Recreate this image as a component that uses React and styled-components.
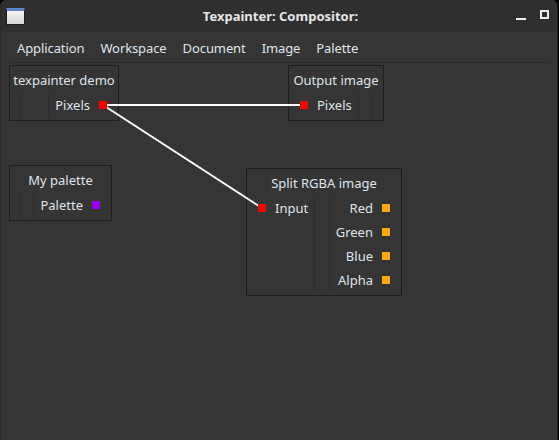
import React from "react";
import styled, { createGlobalStyle } from "styled-components";

const GlobalStyle = createGlobalStyle`
  html, body {
    margin: 0;
    padding: 0;
    background: #000;
    width: 559px;
    height: 440px;
    overflow: hidden;
  }
  * {
    box-sizing: border-box;
  }
`;

const Window = styled.div`
  width: 558px;
  height: 440px;
  display: flex;
  flex-direction: column;
  background: #353535;
  border-left: 1px solid #2a2a2a;
  border-right: 1px solid #222;
  border-radius: 6px 6px 0 0;
  overflow: hidden;
  font-family: "Noto Sans", "Open Sans", sans-serif;
  font-size: 13px;
  color: #dfe4ea;
`;

const TitleBar = styled.div`
  height: 32px;
  flex: none;
  display: flex;
  align-items: center;
  padding: 0 8px 0 5px;
  background: #2f2f2f;
`;

const AppIcon = styled.div`
  width: 19px;
  height: 17px;
  border: 1px solid #1c1c1c;
  border-top: 3px solid #5d85c8;
  background: linear-gradient(#f4f4f4, #d8d8d8);
  border-radius: 1px;
`;

const Title = styled.div`
  flex: 1;
  text-align: center;
  font-weight: bold;
  color: #e6e6e6;
  padding-left: 20px;
`;

const WinButtons = styled.div`
  display: flex;
  align-items: center;
  gap: 14px;
`;

const MinButton = styled.div`
  width: 10px;
  height: 2px;
  margin-top: 6px;
  background: #eee;
`;

const MaxButton = styled.div`
  width: 9px;
  height: 9px;
  margin-top: -4px;
  border: 2px solid #eee;
`;

const MenuBar = styled.div`
  height: 31px;
  flex: none;
  display: flex;
  align-items: center;
  margin: 0 8px;
  padding-top: 1px;
  border-bottom: 1px solid #2b2b2b;
`;

const MenuItem = styled.div`
  padding: 0 8px;
  letter-spacing: -0.1px;
`;

const Canvas = styled.div`
  position: relative;
  flex: 1;
`;

const Wires = styled.svg`
  position: absolute;
  left: 0;
  top: 0;
  width: 100%;
  height: 100%;
  pointer-events: none;
  z-index: 2;
`;

const Node = styled.div`
  position: absolute;
  left: ${(p) => p.$x}px;
  top: ${(p) => p.$y}px;
  width: ${(p) => p.$w}px;
  border: 1px solid #1f1f1f;
  background: #353535;
  padding-bottom: 3px;
  display: flex;
  flex-direction: column;
`;

const NodeTitle = styled.div`
  height: 27px;
  display: flex;
  align-items: center;
  justify-content: center;
  white-space: nowrap;
`;

const NodeBody = styled.div`
  display: flex;
`;

const PortColumn = styled.div`
  display: flex;
  flex-direction: column;
  padding: ${(p) => (p.$side === "in" ? "0 6px 0 11px" : "0 11px 0 6px")};
  &:empty {
    padding: 0;
    width: 10px;
  }
`;

const Spacer = styled.div`
  flex: 1;
  min-width: 12px;
  border-left: 1px solid #2c2c2c;
  border-right: 1px solid #2c2c2c;
`;

const PortRow = styled.div`
  height: 24px;
  display: flex;
  align-items: center;
  justify-content: ${(p) => (p.$side === "in" ? "flex-start" : "flex-end")};
  gap: 9px;
  white-space: nowrap;
`;

const Port = styled.span`
  position: relative;
  z-index: 3;
  width: 8px;
  height: 8px;
  flex: none;
  background: ${(p) => p.$color};
`;

const portColors = {
  image: "#ff0000",
  channel: "#ffaa00",
  palette: "#9900ff",
};

const nodes = [
  {
    title: "texpainter demo",
    x: 8,
    y: 2,
    w: 110,
    inputs: [],
    outputs: [{ name: "Pixels", type: "image" }],
  },
  {
    title: "Output image",
    x: 287,
    y: 2,
    w: 96,
    inputs: [{ name: "Pixels", type: "image" }],
    outputs: [],
  },
  {
    title: "My palette",
    x: 8,
    y: 102,
    w: 103,
    inputs: [],
    outputs: [{ name: "Palette", type: "palette" }],
  },
  {
    title: "Split RGBA image",
    x: 245,
    y: 105,
    w: 156,
    inputs: [{ name: "Input", type: "image" }],
    outputs: [
      { name: "Red", type: "channel" },
      { name: "Green", type: "channel" },
      { name: "Blue", type: "channel" },
      { name: "Alpha", type: "channel" },
    ],
  },
];

const wires = [
  { from: [102, 42], to: [303, 42] },
  { from: [102, 42], to: [261, 145] },
];

const GraphNode = ({ node }) => (
  <Node $x={node.x} $y={node.y} $w={node.w}>
    <NodeTitle>{node.title}</NodeTitle>
    <NodeBody>
      <PortColumn $side="in">
        {node.inputs.map((port) => (
          <PortRow key={port.name} $side="in">
            <Port $color={portColors[port.type]} />
            {port.name}
          </PortRow>
        ))}
      </PortColumn>
      <Spacer />
      <PortColumn $side="out">
        {node.outputs.map((port) => (
          <PortRow key={port.name} $side="out">
            {port.name}
            <Port $color={portColors[port.type]} />
          </PortRow>
        ))}
      </PortColumn>
    </NodeBody>
  </Node>
);

const menu = ["Application", "Workspace", "Document", "Image", "Palette"];

export default function App() {
  return (
    <>
      <GlobalStyle />
      <Window>
        <TitleBar>
          <AppIcon />
          <Title>Texpainter: Compositor:</Title>
          <WinButtons>
            <MinButton />
            <MaxButton />
          </WinButtons>
        </TitleBar>
        <MenuBar>
          {menu.map((m) => (
            <MenuItem key={m}>{m}</MenuItem>
          ))}
        </MenuBar>
        <Canvas>
          {nodes.map((n) => (
            <GraphNode key={n.title} node={n} />
          ))}
          <Wires>
            {wires.map((w, i) => (
              <line
                key={i}
                x1={w.from[0]}
                y1={w.from[1]}
                x2={w.to[0]}
                y2={w.to[1]}
                stroke="#fff"
                strokeWidth="2"
              />
            ))}
          </Wires>
        </Canvas>
      </Window>
    </>
  );
}
